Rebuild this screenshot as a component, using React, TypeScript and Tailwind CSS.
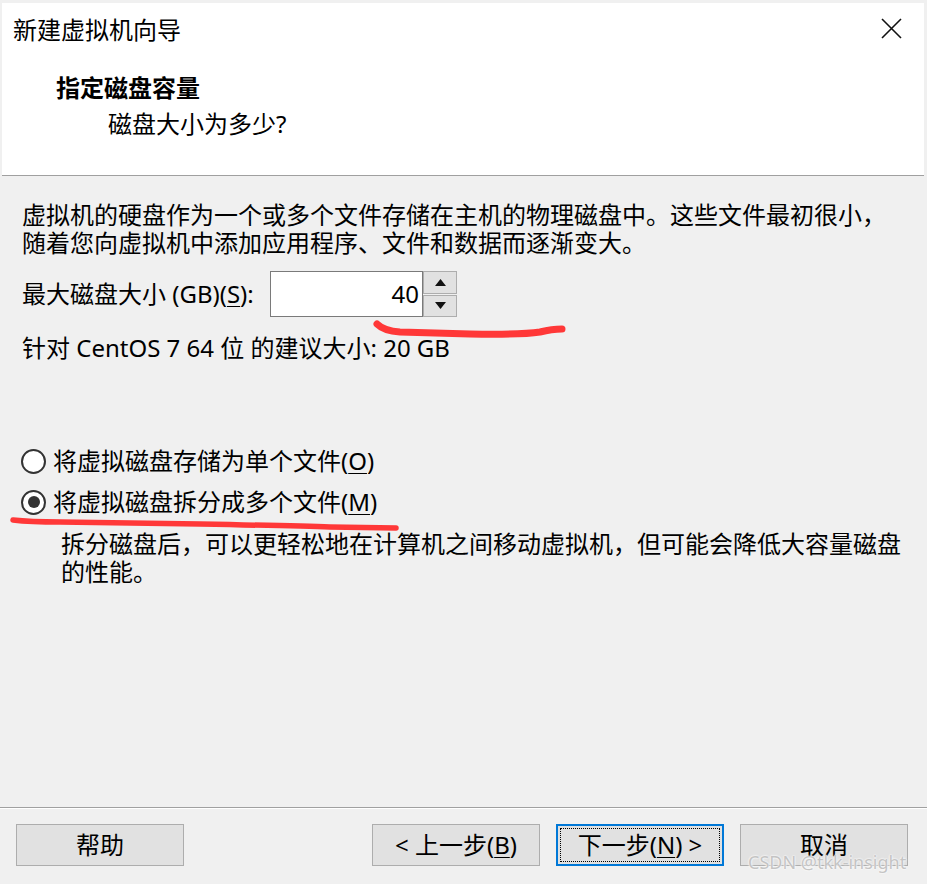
import React from 'react';

const FONT = { fontFamily: '"Noto Sans", "Noto Sans CJK SC", sans-serif' };

function U({ children }: { children: React.ReactNode }) {
  return <span className="underline underline-offset-[3px] decoration-1">{children}</span>;
}

function Radio({ checked, children }: { checked?: boolean; children: React.ReactNode }) {
  return (
    <div className="flex h-[28px] items-center">
      <span className="ml-[-1px] flex h-[25px] w-[25px] items-center justify-center rounded-full border-2 border-[#333333] bg-white">
        {checked && <span className="h-[12px] w-[12px] rounded-full bg-[#333333]" />}
      </span>
      <span className="ml-[7px]">{children}</span>
    </div>
  );
}

function Button({ children, focused }: { children: React.ReactNode; focused?: boolean }) {
  if (focused) {
    return (
      <div className="flex h-[42px] w-[168px] items-center justify-center border-2 border-[#0078d7] bg-[#e1e1e1] p-[2px]">
        <div className="flex h-full w-full items-center justify-center border border-dotted border-black">
          {children}
        </div>
      </div>
    );
  }
  return (
    <div className="flex h-[42px] w-[168px] items-center justify-center border border-[#adadad] bg-[#e1e1e1]">
      {children}
    </div>
  );
}

export default function App() {
  return (
    <div
      className="relative flex h-[884px] w-[927px] flex-col overflow-hidden bg-[#f0f0f0] text-[24px] leading-[28px] text-black"
      style={FONT}
    >
      {/* header */}
      <div className="ml-[2px] mr-[3px] mt-[3px] h-[173px] border-b border-[#a0a0a0] bg-white">
        <div className="flex items-center justify-between pl-[11px] pr-[22px] pt-[13px]">
          <span>新建虚拟机向导</span>
          <svg width="21" height="21" viewBox="0 0 21 21" className="mt-[-3px]">
            <path d="M1 1 L20 20 M20 1 L1 20" stroke="#111" strokeWidth="1.6" fill="none" />
          </svg>
        </div>
        <div className="pl-[54px] pt-[30px] font-semibold">指定磁盘容量</div>
        <div className="pl-[106px] pt-[8px]">磁盘大小为多少?</div>
      </div>

      {/* body */}
      <div className="flex-1 px-[22px] pt-[25px]">
        <p>
          虚拟机的硬盘作为一个或多个文件存储在主机的物理磁盘中。这些文件最初很小，
          <br />
          随着您向虚拟机中添加应用程序、文件和数据而逐渐变大。
        </p>

        <div className="mt-[14px] flex h-[46px] items-center">
          <span className="w-[248px] shrink-0">
            最大磁盘大小 (GB)(<U>S</U>):
          </span>
          <div className="flex h-[46px]">
            <div className="flex w-[153px] items-center justify-end border border-[#7a7a7a] bg-white pr-[3px]">
              40
            </div>
            <div className="flex w-[34px] flex-col gap-[1px]">
              <div className="flex flex-1 items-center justify-center border border-[#adadad] bg-[#e1e1e1]">
                <svg width="11" height="7" viewBox="0 0 11 7">
                  <path d="M5.5 0 L11 7 L0 7 Z" fill="#111" />
                </svg>
              </div>
              <div className="flex flex-1 items-center justify-center border border-[#adadad] bg-[#e1e1e1]">
                <svg width="11" height="7" viewBox="0 0 11 7">
                  <path d="M0 0 L11 0 L5.5 7 Z" fill="#111" />
                </svg>
              </div>
            </div>
          </div>
        </div>

        <p className="mt-[17px]">针对 CentOS 7 64 位 的建议大小: 20 GB</p>

        <div className="mt-[85px]">
          <Radio>
            将虚拟磁盘存储为单个文件(<U>O</U>)
          </Radio>
        </div>
        <div className="mt-[13px]">
          <Radio checked>
            将虚拟磁盘拆分成多个文件(<U>M</U>)
          </Radio>
        </div>
        <p className="mt-[14px] pl-[39px]">
          拆分磁盘后，可以更轻松地在计算机之间移动虚拟机，但可能会降低大容量磁盘
          <br />
          的性能。
        </p>
      </div>

      {/* footer */}
      <div className="h-px bg-[#a0a0a0]" />
      <div className="h-px bg-white" />
      <div className="flex items-center pb-[18px] pl-[16px] pr-[19px] pt-[15px]">
        <Button>帮助</Button>
        <div className="ml-auto flex gap-[16px]">
          <Button>
            &lt; 上一步(<U>B</U>)
          </Button>
          <Button focused>
            下一步(<U>N</U>) &gt;
          </Button>
          <Button>取消</Button>
        </div>
      </div>

      {/* watermark */}
      <span
        className="absolute left-[748px] top-[849px] text-[18px] leading-[26px] text-[#c4c4c4]"
        style={{ fontFamily: '"Noto Sans", sans-serif', textShadow: '0 0 2px #fff, 0 0 2px #fff' }}
      >
        CSDN @tkk-insight
      </span>

      {/* red hand-drawn marks */}
      <svg className="pointer-events-none absolute left-0 top-0" width="927" height="884">
        <path
          d="M377 324 Q384 331 400 332 L470 334 Q520 335 540 332 Q552 329 562 329"
          stroke="#ff3838"
          strokeWidth="7"
          strokeLinecap="round"
          fill="none"
        />
        <path
          d="M13 520 Q30 522 60 522 L200 524 Q300 526 330 527 L396 528"
          stroke="#ff3838"
          strokeWidth="5.5"
          strokeLinecap="round"
          fill="none"
        />
      </svg>
    </div>
  );
}
